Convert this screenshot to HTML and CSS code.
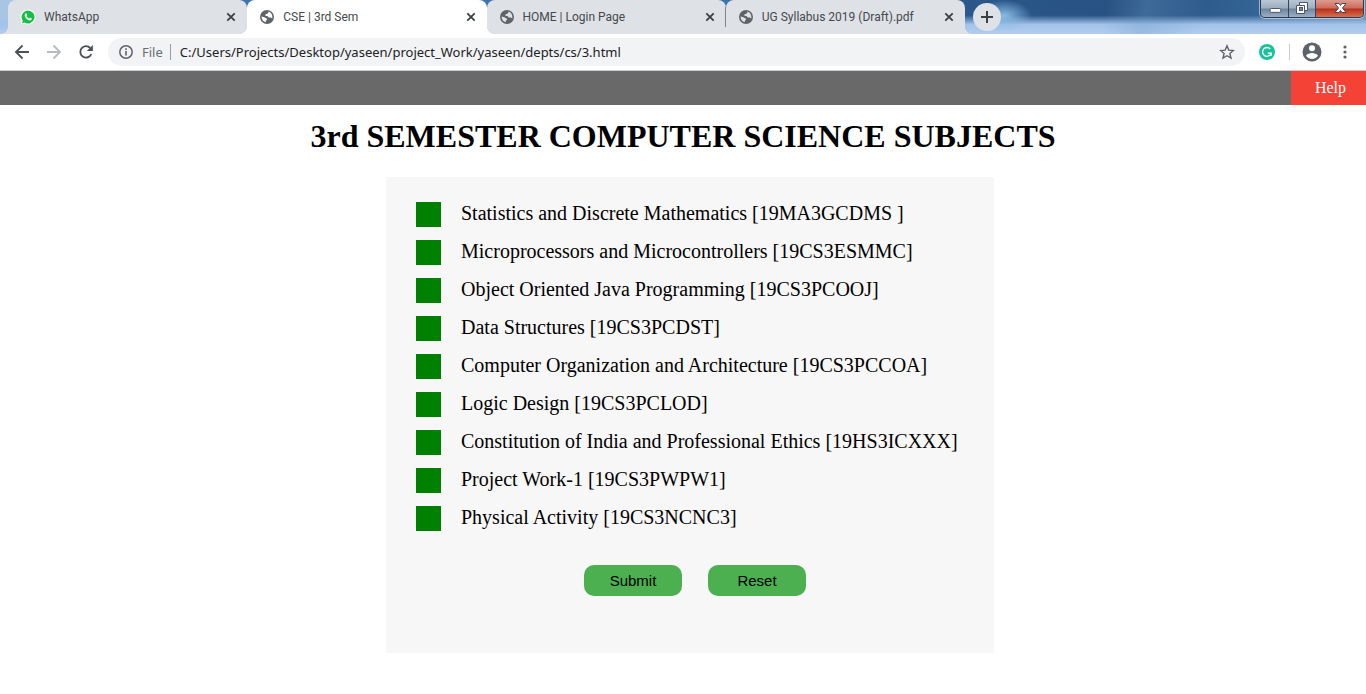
FILE: index.html
```html
<!DOCTYPE html>
<html lang="en">
<head>
<meta charset="utf-8">
<title>CSE | 3rd Sem</title>
<link rel="stylesheet" href="styles.css">
</head>
<body>
<svg class="sprite" aria-hidden="true">
  <symbol id="globe" viewBox="0 0 14 14">
    <path fill="#5f6368" fill-rule="evenodd" d="M7 0a7 7 0 1 1 0 14A7 7 0 1 1 7 0Z M7.800 1.600L8.600 2.200L7.800 3.400L5.600 4.200L5.200 5.700L7.400 6L8.800 7.600L10.700 7.400L12.300 8.600C12.600 6 11.900 3.500 9.700 2.100Z M1.600 6.500L4.400 7.200L6.600 8.400L7.200 9.700L5.800 10.800L5.800 12.300C3 11.600 1.500 9.200 1.600 6.500Z"/>
  </symbol>
  <symbol id="close" viewBox="0 0 10 10">
    <path d="M1.300 1.300L8.700 8.700M8.700 1.300L1.300 8.700" stroke="#3c4043" stroke-width="1.800"/>
  </symbol>
</svg>

<header class="browser">
  <div class="strip">
    <div class="tabs">
      <div class="tab tab-first">
        <svg class="favicon" viewBox="0 0 16 16"><path d="M8 .5a7.500 7.500 0 0 1 0 15 7.500 7.500 0 0 1-3.500-.9L.7 15.500l1-3.600A7.500 7.500 0 0 1 8 .5z" fill="#fff"/><path d="M8 1.500a6.500 6.500 0 1 1-3.300 12.100L2 14.300l.8-2.600A6.500 6.500 0 0 1 8 1.500z" fill="#12c143"/><path d="M5.600 4.500c.4-.3.900-.2 1 .2l.6 1.300c.1.400-.7 1-.6 1.200.6 1.100 1.300 1.800 2.400 2.300.4.200.9-.9 1.300-.7l1.300.6c.4.200.3.800 0 1.200-.6.900-1.700 1.100-2.700.7C7 10.500 5.600 9.100 4.900 7.400c-.5-1.200-.2-2.300.7-2.900z" fill="#fff"/></svg>
        <span class="tab-title">WhatsApp</span>
        <button class="tab-close" aria-label="Close WhatsApp"><svg><use href="#close"/></svg></button>
      </div>
      <div class="tab tab-active">
        <svg class="favicon"><use href="#globe"/></svg>
        <span class="tab-title">CSE | 3rd Sem</span>
        <button class="tab-close" aria-label="Close CSE"><svg><use href="#close"/></svg></button>
      </div>
      <div class="tab tab-divided">
        <svg class="favicon"><use href="#globe"/></svg>
        <span class="tab-title">HOME | Login Page</span>
        <button class="tab-close" aria-label="Close HOME"><svg><use href="#close"/></svg></button>
      </div>
      <div class="tab tab-last">
        <svg class="favicon"><use href="#globe"/></svg>
        <span class="tab-title">UG Syllabus 2019 (Draft).pdf</span>
        <button class="tab-close" aria-label="Close UG Syllabus"><svg><use href="#close"/></svg></button>
      </div>
    </div>
    <button class="new-tab" aria-label="New tab"><svg viewBox="0 0 12 12"><path d="M6 0V12M0 6H12" stroke="#3c4043" stroke-width="2"/></svg></button>
    <div class="window-controls">
      <button class="control minimize" aria-label="Minimize"><svg viewBox="0 0 28 17"><rect x="9.500" y="8.500" width="11" height="4" rx="1" fill="#fff" stroke="#4b5568"/></svg></button>
      <button class="control restore" aria-label="Restore"><svg viewBox="0 0 26 17"><path d="M10.500 2.500h8v8h-3v3h-8v-8h3z" fill="#fff" stroke="#4b5568"/><path d="M10.500 5.500h5v5" fill="none" stroke="#4b5568"/><rect x="10.500" y="7.500" width="3" height="3" fill="#7d8ea3" stroke="#4b5568"/></svg></button>
      <button class="control quit" aria-label="Close window"><svg viewBox="0 0 46 17"><path d="M18.500 3.500h4l1.500 2 1.500-2h4L26 8l3.500 4.500h-4l-1.500-2-1.500 2h-4L22 8z" fill="#fff" stroke="#4b4555"/></svg></button>
    </div>
  </div>

  <div class="toolbar">
    <div class="nav-buttons">
      <button class="icon-button" aria-label="Back"><svg viewBox="0 0 16 16"><path d="M15 8H2M8.500 1.500L2 8l6.500 6.500" fill="none" stroke="#4d5156" stroke-width="1.800"/></svg></button>
      <button class="icon-button" aria-label="Forward"><svg viewBox="0 0 16 16"><path d="M1 8H14M7.500 1.500L14 8l-6.500 6.500" fill="none" stroke="#b8babd" stroke-width="1.800"/></svg></button>
      <button class="icon-button" aria-label="Reload"><svg viewBox="0 0 16 16"><path d="M13.300 10A5.700 5.700 0 1 1 12.200 4" fill="none" stroke="#4d5156" stroke-width="1.900"/><path d="M14.900 1v6.100H8.800z" fill="#4d5156"/></svg></button>
    </div>
    <div class="omnibox">
      <svg class="info" viewBox="0 0 14 14"><circle cx="7" cy="7" r="6.200" fill="none" stroke="#5f6368" stroke-width="1.500"/><path d="M7 6v4.500M7 3.300v1.600" stroke="#5f6368" stroke-width="1.600"/></svg>
      <span class="scheme">File</span>
      <input class="address" type="text" aria-label="Address" value="C:/Users/Projects/Desktop/yaseen/project_Work/yaseen/depts/cs/3.html">
      <button class="icon-button" aria-label="Bookmark"><svg viewBox="0 0 16 16"><path d="M8 1.800l1.800 4.300 4.600.4-3.500 3 1.100 4.600L8 11.700l-4 2.400 1.100-4.600-3.500-3 4.600-.4z" fill="none" stroke="#5f6368" stroke-width="1.400"/></svg></button>
    </div>
    <div class="extensions">
      <button class="icon-button" aria-label="Grammarly"><svg viewBox="0 0 16 16"><circle cx="8" cy="8" r="8" fill="#15c39a"/><path d="M11.300 5A4.400 4.400 0 1 0 12.200 9.200M8.700 9.100h3.600v2.700" fill="none" stroke="#fff" stroke-width="1.300"/></svg></button>
      <button class="icon-button profile" aria-label="Profile"><svg viewBox="0 0 20 20"><circle cx="10" cy="10" r="9.500" fill="#5f6368"/><circle cx="10" cy="6.300" r="3" fill="#fff"/><path d="M4 13.800c1-2 4-2.800 6-2.800s5 .8 6 2.800c-1.300 2-3.500 3.200-6 3.200s-4.700-1.200-6-3.200z" fill="#fff"/></svg></button>
      <button class="icon-button menu" aria-label="Menu"><svg viewBox="0 0 16 16"><g fill="#5f6368"><circle cx="8" cy="3" r="1.600"/><circle cx="8" cy="8" r="1.600"/><circle cx="8" cy="13" r="1.600"/></g></svg></button>
    </div>
  </div>
</header>

<nav class="site-nav"><a class="help" href="#help">Help</a></nav>

<main class="page">
  <h1 class="title">3rd SEMESTER COMPUTER SCIENCE SUBJECTS</h1>
  <form class="subjects">
    <label class="subject"><input type="checkbox">Statistics and Discrete Mathematics [19MA3GCDMS ]</label>
    <label class="subject"><input type="checkbox">Microprocessors and Microcontrollers [19CS3ESMMC]</label>
    <label class="subject"><input type="checkbox">Object Oriented Java Programming [19CS3PCOOJ]</label>
    <label class="subject"><input type="checkbox">Data Structures [19CS3PCDST]</label>
    <label class="subject"><input type="checkbox">Computer Organization and Architecture [19CS3PCCOA]</label>
    <label class="subject"><input type="checkbox">Logic Design [19CS3PCLOD]</label>
    <label class="subject"><input type="checkbox">Constitution of India and Professional Ethics [19HS3ICXXX]</label>
    <label class="subject"><input type="checkbox">Project Work-1 [19CS3PWPW1]</label>
    <label class="subject"><input type="checkbox">Physical Activity [19CS3NCNC3]</label>
    <div class="actions">
      <button class="action" type="submit">Submit</button>
      <button class="action" type="reset">Reset</button>
    </div>
  </form>
</main>
</body>
</html>
```

FILE: styles.css
```css
* { box-sizing: border-box; }

body {
  margin: 0;
  background: #fff;
  color: #000;
  font-family: "Liberation Serif", "Times New Roman", serif;
}

button {
  margin: 0;
  padding: 0;
  border: 0;
  background: none;
  color: inherit;
}

svg { display: block; }

.sprite { display: none; }

.browser {
  border-bottom: 1px solid #c8cacc;
  font-family: "Noto Sans", "Open Sans", sans-serif;
}

/* Tab strip */
.strip {
  display: flex;
  align-items: flex-start;
  height: 34px;
  padding-left: 8px;
  background:
    radial-gradient(ellipse 28px 16px at 1004px 16px, #8cbde6, transparent),
    linear-gradient(100deg, transparent 1090px, #6a9bc855 1130px, transparent 1190px),
    linear-gradient(to bottom, transparent 45%, #a2c3ea 72%, #b4cdee),
    linear-gradient(to right, #a9c5e6 0, #a9c5e6 20px, #3f73b0 240px, #3b73ae 720px, #2a568a 980px, #275180 1140px, #336394 1250px, #5f88b0);
}

.tabs {
  display: flex;
  flex: 0 1 957px;
  min-width: 0;
}

.tab {
  position: relative;
  display: flex;
  flex: 1 1 0;
  align-items: center;
  min-width: 0;
  height: 34px;
  padding: 0 11px 0 12px;
  border-radius: 8px 8px 0 0;
  background: #dee1e6;
}

.tab-active { z-index: 1; background: #fff; }

.tab-active::before,
.tab-active::after,
.tab-first::before,
.tab-last::after {
  content: "";
  position: absolute;
  bottom: 0;
  width: 8px;
  height: 8px;
}

.tab-first::before {
  right: 100%;
  background: radial-gradient(circle at 0 0, transparent 8px, #dee1e6 8px);
}

.tab-last::after {
  left: 100%;
  background: radial-gradient(circle at 100% 0, transparent 8px, #dee1e6 8px);
}

.tab-active::before {
  right: 100%;
  background: radial-gradient(circle at 0 0, transparent 8px, #fff 8px);
}

.tab-active::after {
  left: 100%;
  background: radial-gradient(circle at 100% 0, transparent 8px, #fff 8px);
}

.tab-divided::after {
  content: "";
  position: absolute;
  top: 7px;
  right: 0;
  width: 1px;
  height: 20px;
  background: #808387;
}

.favicon {
  flex: none;
  width: 16px;
  height: 16px;
  padding: 1px;
}

.tab-first .favicon { padding: 0; }

.tab-title {
  flex: 1;
  margin-left: 8px;
  overflow: hidden;
  color: #45494d;
  font-family: Roboto, "Open Sans", sans-serif;
  font-size: 12px;
  line-height: 16px;
  white-space: nowrap;
}

.tab-close { flex: none; }
.tab-close svg { width: 10px; height: 10px; }

.new-tab {
  display: grid;
  flex: none;
  place-items: center;
  width: 28px;
  height: 28px;
  margin: 3px 0 0 8px;
  border-radius: 50%;
  background: #dee1e6;
}

.new-tab svg { width: 12px; height: 12px; }

.window-controls {
  display: flex;
  height: 18px;
  margin: 0 2px 0 auto;
  border: 1px solid #2b3a50;
  border-top: 0;
  border-radius: 0 0 5px 5px;
  box-shadow: 0 0 0 1px #cfdcecaa;
  overflow: hidden;
}

.control {
  width: 28px;
  height: 17px;
  border-right: 1px solid #34465f;
  background: linear-gradient(#b9c6d4, #9dadbf 48%, #6f859e 52%, #9bb0c6);
}

.control svg { width: 100%; height: 17px; }
.restore { width: 27px; }

.quit {
  width: 47px;
  border-right: 0;
  background: linear-gradient(#dc9c90, #cf6a58 48%, #b82e1c 52%, #d6714c);
}

/* Toolbar */
.toolbar {
  display: flex;
  align-items: center;
  height: 36px;
  background: #fff;
}

.icon-button { flex: none; }
.icon-button svg { width: 16px; height: 16px; }

.nav-buttons {
  display: flex;
  gap: 16px;
  padding: 0 14px;
}

.omnibox {
  display: flex;
  flex: 1;
  align-items: center;
  min-width: 0;
  height: 28px;
  padding: 0 10px 0 11px;
  border-radius: 14px;
  background: #f1f3f4;
}

.info {
  flex: none;
  width: 14px;
  height: 14px;
}

.scheme {
  margin-left: 9px;
  padding-right: 7px;
  border-right: 1px solid #9a9da1;
  color: #6a6e73;
  font-size: 13px;
  line-height: 16px;
}

.address {
  flex: 1;
  min-width: 0;
  padding: 0 0 0 9px;
  border: 0;
  outline: 0;
  background: none;
  color: #202124;
  font: 13px/18px "Noto Sans", "Open Sans", sans-serif;
}

.extensions {
  display: flex;
  align-items: center;
  padding: 0 13px 0 14px;
}

.profile {
  margin-left: 14px;
  padding-left: 12px;
  border-left: 1px solid #c9cbce;
}

.profile svg { width: 20px; height: 20px; margin: -2px 0; }
.menu { margin-left: 15px; }

/* Page */
.site-nav {
  display: flex;
  justify-content: flex-end;
  background: #696969;
}

.help {
  padding: 8px 20px 8px 24px;
  background: #f44336;
  color: #fff;
  font-size: 16px;
  line-height: 18px;
  text-decoration: none;
}

.page {
  display: flex;
  flex-direction: column;
  align-items: center;
}

.title {
  margin: 13px 0 23px;
  font-size: 32px;
  line-height: 36px;
}

.subjects {
  display: flex;
  flex-direction: column;
  gap: 13px;
  width: 608px;
  max-width: 100%;
  margin-left: 14px;
  padding: 25px 30px 57px;
  background: #f7f7f7;
}

.subject {
  display: flex;
  gap: 20px;
  font-size: 20px;
  line-height: 23px;
}

.subject input {
  flex: none;
  width: 25px;
  height: 25px;
  margin: 0;
  appearance: none;
  background: #008000;
}

.subject input:checked { background: #4caf50; }

.actions {
  display: flex;
  justify-content: center;
  gap: 26px;
  margin-top: 21px;
  padding-left: 10px;
}

.action {
  width: 98px;
  height: 31px;
  border-radius: 10px;
  background: #4caf50;
  color: #000;
  font: 15px/17px "Liberation Sans", Arial, sans-serif;
}
```
